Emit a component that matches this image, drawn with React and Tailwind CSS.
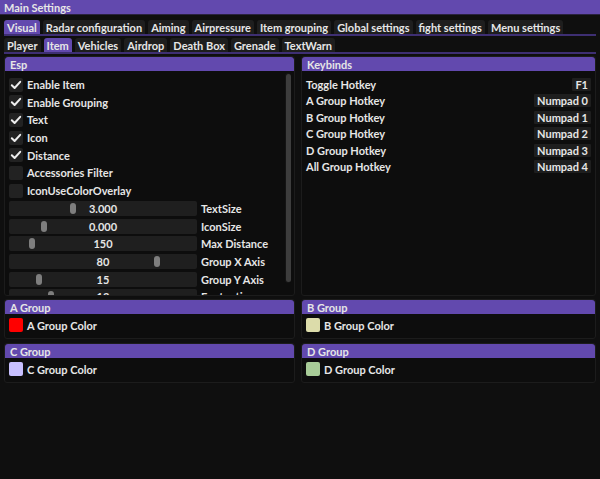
import React from "react";

const tabs1 = ["Visual", "Radar configuration", "Aiming", "Airpressure", "Item grouping", "Global settings", "fight settings", "Menu settings"];
const tabs2 = ["Player", "Item", "Vehicles", "Airdrop", "Death Box", "Grenade", "TextWarn"];

function Tab({ label, active }) {
  return (
    <div className={"h-[14px] px-[3px] rounded-t-[3px] flex flex-none items-center whitespace-nowrap leading-none " + (active ? "bg-[#6249ae]" : "bg-[#1e1e1e]")}>
      {label}
    </div>
  );
}

function Check({ label, on }) {
  return (
    <div className="h-[15px] flex items-center gap-[4px]">
      <div className="w-[14px] h-[14px] rounded-[2px] bg-[#222222] flex items-center justify-center">
        {on && (
          <svg width="12" height="12" viewBox="0 0 12 12">
            <path d="M1.8 6.2 L4.6 9 L10.2 2.8" stroke="#ececec" strokeWidth="2" fill="none" strokeLinecap="round" strokeLinejoin="round" />
          </svg>
        )}
      </div>
      <span>{label}</span>
    </div>
  );
}

function Slider({ value, label, pos }) {
  return (
    <div className="h-[15px] flex items-center gap-[4px]">
      <div className="relative w-[188px] h-[15px] rounded-[2px] bg-[#1f1f1f] flex items-center justify-center">
        <div className="absolute top-[2px] w-[6px] h-[11px] rounded-[3px] bg-[#7e7e7e]" style={{ left: pos }} />
        <span className="relative">{value}</span>
      </div>
      <span className="whitespace-nowrap">{label}</span>
    </div>
  );
}

function Header({ children }) {
  return <div className="h-[14px] flex-none bg-[#6249ae] rounded-t-[3px] px-[5px] flex items-center leading-none">{children}</div>;
}

function KeyRow({ label, k }) {
  return (
    <div className="h-[16.5px] flex items-center justify-between">
      <span>{label}</span>
      <span className="h-[13px] px-[3px] bg-[#1e1e1e] rounded-[1px] flex items-center leading-none">{k}</span>
    </div>
  );
}

function GroupPanel({ name, color }) {
  return (
    <div className="h-[40px] rounded-[3px] border border-[#1c1c1c] bg-[#0d0d0d] flex flex-col">
      <Header>{name} Group</Header>
      <div className="flex items-center gap-[4px] px-[4px] mt-[4px]">
        <div className="w-[14px] h-[14px] rounded-[2px]" style={{ background: color }} />
        <span>{name} Group Color</span>
      </div>
    </div>
  );
}

export default function App() {
  return (
    <div
      className="w-[600px] h-[479px] bg-[#0f0f0f] overflow-hidden text-[#e6e6e6] text-[11px] font-bold leading-none"
      style={{ fontFamily: 'Lato, sans-serif' }}
    >
      <div className="h-[15px] bg-[#6249ae] px-[4px] flex items-center border-b border-[#2a2240]">Main Settings</div>
      <div className="px-[4px] pt-[5px]">
        <div className="flex gap-[3px] border-b-[2px] border-[#3e2f73]">
          {tabs1.map((t) => (
            <Tab key={t} label={t} active={t === "Visual"} />
          ))}
        </div>
        <div className="flex gap-[3px] mt-[2px] border-b-[2px] border-[#3e2f73]">
          {tabs2.map((t) => (
            <Tab key={t} label={t} active={t === "Item"} />
          ))}
        </div>
        <div className="grid grid-cols-[291px_1fr] gap-[6px] mt-[2px]">
          <div className="h-[240px] rounded-[3px] border border-[#1c1c1c] bg-[#0d0d0d] flex flex-col overflow-hidden">
            <Header>Esp</Header>
            <div className="relative flex-1 overflow-hidden">
              <div className="absolute right-[3px] top-[2px] bottom-[12px] w-[6px] rounded-[3px] bg-[#141414]">
                <div className="mx-auto mt-[1px] w-[5px] h-[208px] rounded-[3px] bg-[#3d3d3d]" />
              </div>
              <div className="pl-[4px] pt-[6px] flex flex-col gap-[2.7px]">
                <Check label="Enable Item" on />
                <Check label="Enable Grouping" on />
                <Check label="Text" on />
                <Check label="Icon" on />
                <Check label="Distance" on />
                <Check label="Accessories Filter" />
                <Check label="IconUseColorOverlay" />
                <Slider value="3.000" label="TextSize" pos={61} />
                <Slider value="0.000" label="IconSize" pos={32} />
                <Slider value="150" label="Max Distance" pos={20} />
                <Slider value="80" label="Group X Axis" pos={145} />
                <Slider value="15" label="Group Y Axis" pos={27} />
                <Slider value="12" label="Font ratio" pos={39} />
              </div>
            </div>
          </div>
          <div className="h-[240px] rounded-[3px] border border-[#1c1c1c] bg-[#0d0d0d] flex flex-col">
            <Header>Keybinds</Header>
            <div className="px-[4px] pt-[5px] flex flex-col">
              <KeyRow label="Toggle Hotkey" k="F1" />
              <KeyRow label="A Group Hotkey" k="Numpad 0" />
              <KeyRow label="B Group Hotkey" k="Numpad 1" />
              <KeyRow label="C Group Hotkey" k="Numpad 2" />
              <KeyRow label="D Group Hotkey" k="Numpad 3" />
              <KeyRow label="All Group Hotkey" k="Numpad 4" />
            </div>
          </div>
          <div className="col-span-2 grid grid-cols-[291px_1fr] gap-x-[6px] gap-y-[4px] -mt-[3px]">
            <GroupPanel name="A" color="#ff0000" />
            <GroupPanel name="B" color="#dcdcaa" />
            <GroupPanel name="C" color="#c8c0ff" />
            <GroupPanel name="D" color="#a8cc98" />
          </div>
        </div>
      </div>
    </div>
  );
}
